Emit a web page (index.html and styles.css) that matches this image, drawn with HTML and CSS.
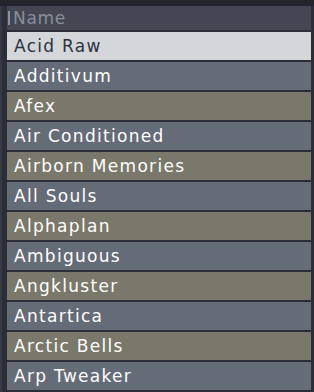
FILE: index.html
```html
<!DOCTYPE html>
<html>
<head>
<meta charset="utf-8">
<link rel="stylesheet" href="styles.css">
</head>
<body>
<div class="topband"></div>
<div class="panel">
  <div class="edge"></div>
  <div class="list">
    <div class="header"><span class="bar"></span><span class="htext">Name</span></div>
    <div class="row sel">Acid Raw</div>
    <div class="row b">Additivum</div>
    <div class="row a">Afex</div>
    <div class="row b">Air Conditioned</div>
    <div class="row a">Airborn Memories</div>
    <div class="row b">All Souls</div>
    <div class="row a">Alphaplan</div>
    <div class="row b">Ambiguous</div>
    <div class="row a">Angkluster</div>
    <div class="row b">Antartica</div>
    <div class="row a">Arctic Bells</div>
    <div class="row b">Arp Tweaker</div>
  </div>
</div>
</body>
</html>
```
FILE: styles.css
```css
html, body {
  margin: 0;
  padding: 0;
  width: 314px;
  height: 392px;
  overflow: hidden;
  background: #2b2e38;
  font-family: "DejaVu Sans", sans-serif;
}
.topband {
  height: 6px;
  background: #23252d;
}
.panel {
  display: flex;
  height: 386px;
}
.edge {
  width: 2px;
  background: #363a45;
  margin-right: 5px;
}
.list {
  width: 304px;
  display: flex;
  flex-direction: column;
  gap: 2px;
}
.header {
  height: 24px;
  background: #424753;
  display: flex;
  align-items: center;
}
.bar {
  width: 2px;
  height: 14px;
  background: #8e929b;
  margin-left: 1px;
  margin-right: 3px;
}
.htext {
  color: #8a8e98;
  font-size: 17px;
  letter-spacing: 0.7px;
}
.row {
  height: 28px;
  line-height: 28px;
  padding-left: 7px;
  font-size: 17px;
  letter-spacing: 1.3px;
  color: #ffffff;
  white-space: nowrap;
}
.row.sel {
  background: #d3d7da;
  color: #2d3240;
}
.row.a {
  background: #7a786a;
}
.row.b {
  background: #666b78;
}
```
